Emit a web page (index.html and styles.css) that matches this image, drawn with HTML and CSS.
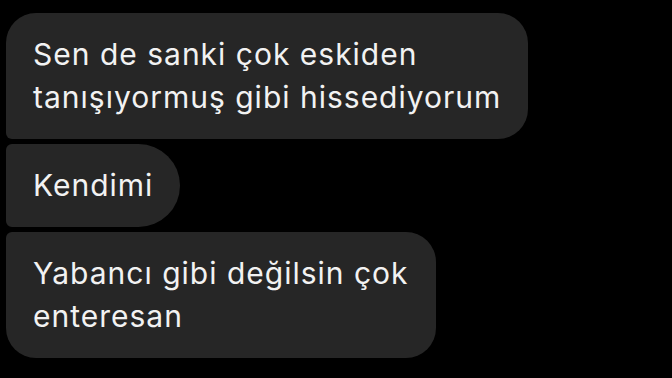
FILE: index.html
```html
<!DOCTYPE html>
<html lang="tr">
<head>
    <meta charset="UTF-8">
    <meta name="viewport" content="width=device-width, initial-scale=1.0">
    <title>Mesajlar</title>
    <link rel="stylesheet" href="styles.css">
</head>
<body>
    <div class="thread">
        <div class="bubble first">Sen de sanki çok eskiden<br>tanışıyormuş gibi hissediyorum</div>
        <div class="bubble middle">Kendimi</div>
        <div class="bubble last">Yabancı gibi değilsin çok<br>enteresan</div>
    </div>
</body>
</html>
```

FILE: styles.css
```css
body {
    margin: 0;
    background-color: #000;
    font-family: Inter, "Noto Sans", sans-serif;
    color: #f2f2f2;
}

.thread {
    display: flex;
    flex-direction: column;
    align-items: flex-start;
    gap: 5px;
    padding: 13px 6px;
}

.bubble {
    background-color: #262626;
    padding: 20px 27px;
    font-size: 30px;
    line-height: 43px;
    letter-spacing: 1px;
    white-space: nowrap;
}

.first {
    border-radius: 30px 30px 30px 6px;
}

.middle {
    border-radius: 6px 42px 42px 6px;
}

.last {
    border-radius: 6px 30px 30px 30px;
}
```
